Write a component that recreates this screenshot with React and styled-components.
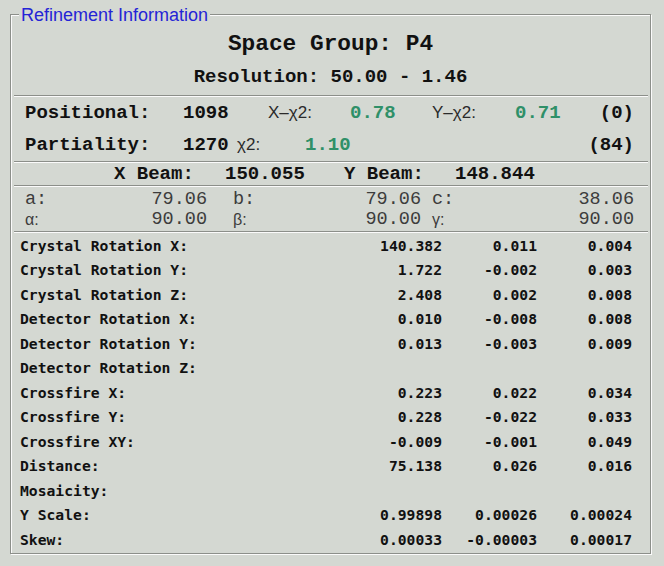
import React from "react";
import styled, { createGlobalStyle } from "styled-components";

const Global = createGlobalStyle`
  html, body { margin: 0; padding: 0; background: #d4d8d2; }
  body { width: 664px; height: 566px; overflow: hidden; }
`;

const Page = styled.div`
  padding: 14px 0 0 10px;
`;

const Group = styled.div`
  position: relative;
  width: 641px;
  height: 540px;
  box-sizing: border-box;
  border: 1px solid #8c8f8a;
  box-shadow: inset 1px 1px 0 #fbfbfb, 1px 1px 0 #fbfbfb;
  display: flex;
  flex-direction: column;
`;

const Legend = styled.div`
  position: absolute;
  left: 8px;
  top: -9px;
  padding: 0 2px;
  background: #d4d8d2;
  font-family: "Liberation Sans", Arial, sans-serif;
  font-size: 18px;
  line-height: 18px;
  color: #2424d6;
`;

const Separator = styled.div`
  height: 0;
  margin: 0 2px 0 3px;
  border-top: 1px solid #8c8f8a;
  border-bottom: 1px solid #fbfbfb;
`;

const Header = styled.div`
  height: 80px;
  box-sizing: border-box;
  padding-top: 14px;
  display: flex;
  flex-direction: column;
  align-items: center;
  gap: 6px;
  font-family: "Liberation Mono", "Courier New", monospace;
  font-weight: bold;
  color: #111;
`;

const Title = styled.div`
  font-size: ${(p) => p.$size}px;
  line-height: ${(p) => p.$lh}px;
  white-space: pre;
`;

const Section = styled.div`
  height: ${(p) => p.$h}px;
  box-sizing: border-box;
  padding-top: ${(p) => p.$pt || 0}px;
  display: flex;
  flex-direction: column;
`;

const StatRow = styled.div`
  display: grid;
  grid-template-columns: ${(p) => p.$cols};
  align-items: center;
  height: ${(p) => p.$h}px;
  padding: 0 16px 0 ${(p) => p.$pl}px;
  font-family: "Liberation Mono", "Courier New", monospace;
  font-weight: bold;
  font-size: 19px;
  color: #111;
  white-space: pre;
`;

const SansLabel = styled.span`
  font-family: "Liberation Sans", Arial, sans-serif;
  font-weight: normal;
  font-size: 17px;
  color: #2a2a2a;
`;

const Green = styled.span`
  color: #2f9068;
`;

const CellRow = styled.div`
  display: grid;
  grid-template-columns: 208px 199px 1fr;
  height: 20px;
  align-items: center;
  padding: 0 16px 0 14px;
  font-family: "Liberation Mono", "Courier New", monospace;
  font-size: 18.5px;
  color: #3c3c3c;
`;

const Cell = styled.div`
  display: flex;
  justify-content: space-between;
  align-items: center;
  padding-right: ${(p) => p.$pr}px;
`;

const Greek = styled.span`
  font-family: "Liberation Sans", Arial, sans-serif;
  font-size: 16px;
  color: #3c3c3c;
`;

const Table = styled.div`
  display: flex;
  flex-direction: column;
  padding: 0 18px 0 9px;
`;

const TRow = styled.div`
  display: grid;
  grid-template-columns: 1fr 100px 95px 95px;
  height: 24.5px;
  align-items: center;
  font-family: "DejaVu Sans Mono", "Liberation Mono", monospace;
  font-weight: bold;
  font-size: 14.7px;
  color: #111;
  white-space: pre;
`;

const Num = styled.span`
  text-align: right;
`;

const rows = [
  ["Crystal Rotation X:", "140.382", "0.011", "0.004"],
  ["Crystal Rotation Y:", "1.722", "-0.002", "0.003"],
  ["Crystal Rotation Z:", "2.408", "0.002", "0.008"],
  ["Detector Rotation X:", "0.010", "-0.008", "0.008"],
  ["Detector Rotation Y:", "0.013", "-0.003", "0.009"],
  ["Detector Rotation Z:", "", "", ""],
  ["Crossfire X:", "0.223", "0.022", "0.034"],
  ["Crossfire Y:", "0.228", "-0.022", "0.033"],
  ["Crossfire XY:", "-0.009", "-0.001", "0.049"],
  ["Distance:", "75.138", "0.026", "0.016"],
  ["Mosaicity:", "", "", ""],
  ["Y Scale:", "0.99898", "0.00026", "0.00024"],
  ["Skew:", "0.00033", "-0.00003", "0.00017"],
];

export default function App() {
  return (
    <>
      <Global />
      <Page>
        <Group>
          <Legend>Refinement Information</Legend>
          <Header>
            <Title $size={22.8} $lh={30}>Space Group: P4</Title>
            <Title $size={19} $lh={24}>Resolution: 50.00 - 1.46</Title>
          </Header>
          <Separator />
          <Section $h={64}>
            <StatRow $h={32} $pl={14} $cols="158px 85px 82px 82px 83px 1fr auto">
              <span>Positional:</span>
              <span>1098</span>
              <SansLabel>X–χ2:</SansLabel>
              <Green>0.78</Green>
              <SansLabel>Y–χ2:</SansLabel>
              <Green>0.71</Green>
              <span>(0)</span>
            </StatRow>
            <StatRow $h={32} $pl={14} $cols="158px 54px 68px 1fr auto">
              <span>Partiality:</span>
              <span>1270</span>
              <SansLabel>χ2:</SansLabel>
              <Green>1.10</Green>
              <span>(84)</span>
            </StatRow>
          </Section>
          <Separator />
          <Section $h={22}>
            <StatRow $h={22} $pl={103} $cols="111px 119px 111px 1fr">
              <span>X Beam:</span>
              <span>150.055</span>
              <span>Y Beam:</span>
              <span>148.844</span>
            </StatRow>
          </Section>
          <Separator />
          <Section $h={44} $pt={2}>
            <CellRow>
              <Cell $pr={26}><span>a:</span><span>79.06</span></Cell>
              <Cell $pr={11}><span>b:</span><span>79.06</span></Cell>
              <Cell $pr={0}><span>c:</span><span>38.06</span></Cell>
            </CellRow>
            <CellRow>
              <Cell $pr={26}><Greek>α:</Greek><span>90.00</span></Cell>
              <Cell $pr={11}><Greek>β:</Greek><span>90.00</span></Cell>
              <Cell $pr={0}><Greek>γ:</Greek><span>90.00</span></Cell>
            </CellRow>
          </Section>
          <Separator />
          <Table>
            {rows.map((r) => (
              <TRow key={r[0]}>
                <span>{r[0]}</span>
                <Num>{r[1]}</Num>
                <Num>{r[2]}</Num>
                <Num>{r[3]}</Num>
              </TRow>
            ))}
          </Table>
        </Group>
      </Page>
    </>
  );
}
